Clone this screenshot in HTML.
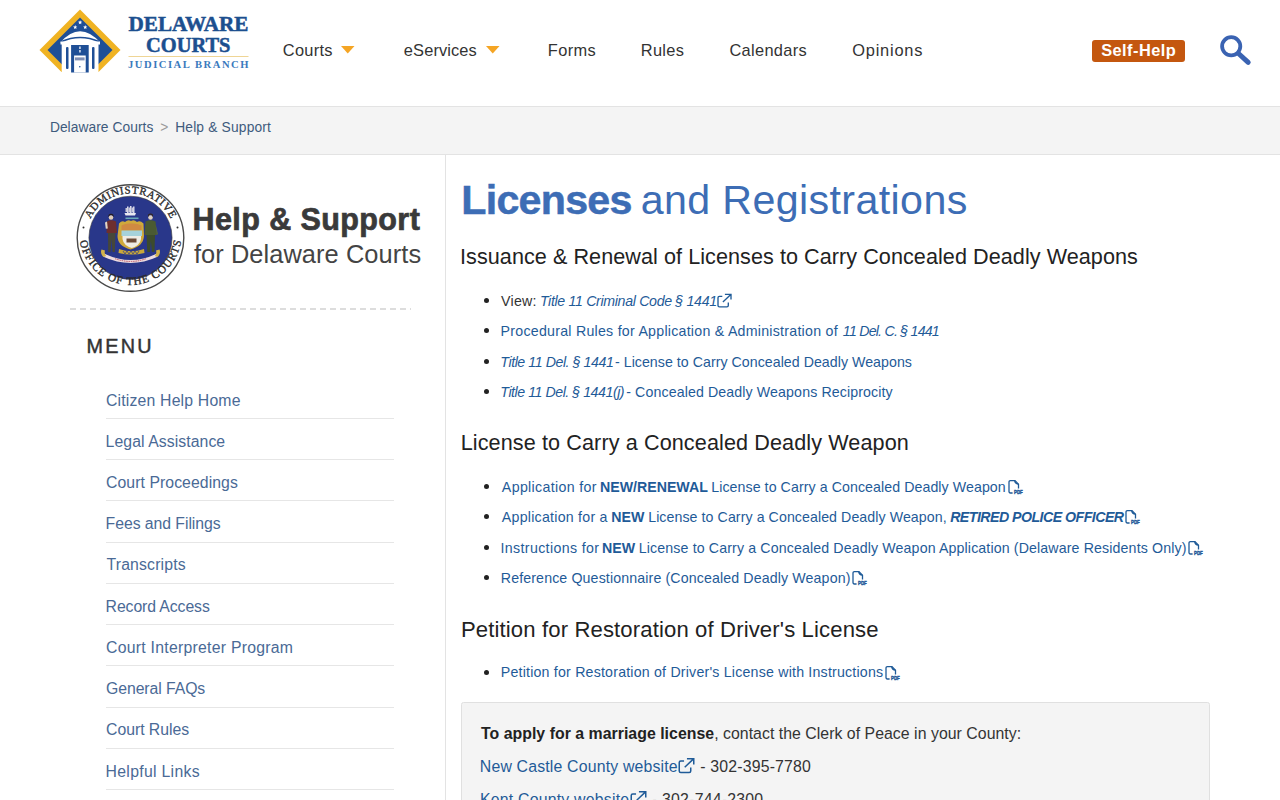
<!DOCTYPE html>
<html><head><meta charset="utf-8"><title>Licenses and Registrations</title>
<style>
html,body{margin:0;padding:0;background:#fff;width:1280px;height:800px;overflow:hidden;position:relative}
.t{position:absolute;white-space:nowrap;line-height:1;}
.t i{font-style:italic}
</style></head><body>
<div style="position:absolute;left:0px;top:0px;width:1280px;height:106px;background:#fff"></div>
<div style="position:absolute;left:0px;top:106px;width:1280px;height:1px;background:#e3e3e3"></div>
<div style="position:absolute;left:0px;top:107px;width:1280px;height:47px;background:#f4f4f4"></div>
<div style="position:absolute;left:0px;top:154px;width:1280px;height:1px;background:#e3e3e3"></div>
<div style="position:absolute;left:445px;top:155px;width:1px;height:645px;background:#e3e3e3"></div>
<svg style="position:absolute;left:0;top:0" width="260" height="106" viewBox="0 0 260 106">
<defs><clipPath id="dclip"><rect x="0" y="0" width="260" height="72"/></clipPath></defs>
<g clip-path="url(#dclip)">
<polygon points="80,9.5 120.5,50 80,90.5 39.5,50" fill="#f0b323"/>
<polygon points="80,17.5 112.5,50 80,82.5 47.5,50" fill="#1f4f96"/>
</g>
<polygon points="80.10,20.20 80.68,21.60 82.19,21.72 81.04,22.71 81.39,24.18 80.10,23.39 78.81,24.18 79.16,22.71 78.01,21.72 79.52,21.60" fill="#fff"/><polygon points="75.20,25.00 75.78,26.40 77.29,26.52 76.14,27.51 76.49,28.98 75.20,28.19 73.91,28.98 74.26,27.51 73.11,26.52 74.62,26.40" fill="#fff"/><polygon points="85.20,25.00 85.78,26.40 87.29,26.52 86.14,27.51 86.49,28.98 85.20,28.19 83.91,28.98 84.26,27.51 83.11,26.52 84.62,26.40" fill="#fff"/>
<path d="M60.3,42.5 Q80,20 100.2,42.5 Z" fill="#fff"/>
<path d="M61,41.8 Q80,33.2 99.5,41.8" fill="none" stroke="#1f4f96" stroke-width="1.5"/>
<rect x="60.5" y="41.5" width="39.5" height="3" fill="#fff"/>
<rect x="61.7" y="43" width="36.8" height="29.5" fill="#fff"/>
<rect x="66" y="46.9" width="2.5" height="22.1" rx="1" fill="#1f4f96"/>
<rect x="92" y="46.9" width="2.5" height="22.1" rx="1" fill="#1f4f96"/>
<rect x="71.1" y="45" width="17.6" height="27.5" fill="#1f4f96"/>
<rect x="74.1" y="55.5" width="11.6" height="17" fill="#fff"/>
<rect x="74.9" y="57.4" width="9.7" height="3" fill="#7f8fb5"/>
<circle cx="79.8" cy="66.8" r="0.8" fill="#1f4f96"/>
<rect x="79.3" y="46.5" width="1.3" height="2.5" fill="#fff"/>
<rect x="79.3" y="50" width="1.3" height="2.5" fill="#fff"/>
<text x="128.5" y="31.3" font-family="Liberation Serif" font-weight="bold" font-size="20.6" fill="#1c4f8f" stroke="#1c4f8f" stroke-width="0.5" textLength="120" lengthAdjust="spacingAndGlyphs">DELAWARE</text>
<text x="146" y="51.6" font-family="Liberation Serif" font-weight="bold" font-size="20.6" fill="#1c4f8f" stroke="#1c4f8f" stroke-width="0.5" textLength="84.5" lengthAdjust="spacingAndGlyphs">COURTS</text>
<rect x="128.5" y="56" width="120" height="1" fill="#efd595"/>
<text x="128" y="68.2" font-family="Liberation Serif" font-weight="bold" font-size="10.6" fill="#3a7abd" textLength="120.5" lengthAdjust="spacing">JUDICIAL BRANCH</text>
</svg>
<div class="t" id="nav1" style="left:282.77px;top:41.92px;font-size:16.4px;color:#333;font-weight:normal;letter-spacing:0.295px;font-family:'Liberation Sans', sans-serif;">Courts</div>
<div class="t" id="nav2" style="left:403.86px;top:41.92px;font-size:16.4px;color:#333;font-weight:normal;letter-spacing:0.122px;font-family:'Liberation Sans', sans-serif;">eServices</div>
<div class="t" id="nav3" style="left:547.79px;top:41.92px;font-size:16.4px;color:#333;font-weight:normal;letter-spacing:0.372px;font-family:'Liberation Sans', sans-serif;">Forms</div>
<div class="t" id="nav4" style="left:640.79px;top:41.92px;font-size:16.4px;color:#333;font-weight:normal;letter-spacing:0.319px;font-family:'Liberation Sans', sans-serif;">Rules</div>
<div class="t" id="nav5" style="left:729.40px;top:41.92px;font-size:16.4px;color:#333;font-weight:normal;letter-spacing:0.320px;font-family:'Liberation Sans', sans-serif;">Calendars</div>
<div class="t" id="nav6" style="left:852.33px;top:41.92px;font-size:16.4px;color:#333;font-weight:normal;letter-spacing:0.762px;font-family:'Liberation Sans', sans-serif;">Opinions</div>
<svg style="position:absolute;left:341px;top:46px" width="14" height="8" viewBox="0 0 14 8"><polygon points="0,0 13.5,0 6.75,7.5" fill="#f5a524"/></svg>
<svg style="position:absolute;left:485.5px;top:46px" width="14" height="8" viewBox="0 0 14 8"><polygon points="0,0 13.5,0 6.75,7.5" fill="#f5a524"/></svg>
<div style="position:absolute;left:1092px;top:40px;width:93px;height:22px;background:#c4570f;border-radius:3px"></div>
<div class="t" id="selfhelp" style="left:1101.16px;top:41.72px;font-size:16.4px;color:#fff;font-weight:bold;letter-spacing:0.443px;font-family:'Liberation Sans', sans-serif;">Self-Help</div>
<svg style="position:absolute;left:1215px;top:30px" width="40" height="40" viewBox="0 0 40 40"><circle cx="16.2" cy="16.3" r="9.1" fill="none" stroke="#3a63b2" stroke-width="3.8"/><line x1="23.5" y1="23.5" x2="33.2" y2="32.4" stroke="#3a63b2" stroke-width="5" stroke-linecap="round"/></svg>
<div class="t" id="bc1" style="left:49.89px;top:121.12px;font-size:13.8px;color:#3e5b7d;font-weight:normal;letter-spacing:0.056px;font-family:'Liberation Sans', sans-serif;">Delaware Courts</div>
<div class="t" id="bc2" style="left:160.30px;top:121.12px;font-size:13.8px;color:#9a9a9a;font-weight:normal;letter-spacing:0.000px;font-family:'Liberation Sans', sans-serif;">&gt;</div>
<div class="t" id="bc3" style="left:175.16px;top:121.12px;font-size:13.8px;color:#3e5b7d;font-weight:normal;letter-spacing:0.168px;font-family:'Liberation Sans', sans-serif;">Help &amp; Support</div>
<svg style="position:absolute;left:70px;top:177px" width="120" height="120" viewBox="70 177 120 120">
<defs>
<path id="sealtop" d="M 86,238 A 44.5,44.5 0 0 1 175,238"/>
<path id="sealbot" d="M 79.5,234 A 51,51 0 0 0 181.5,234"/>
</defs>
<circle cx="130.5" cy="238" r="53.3" fill="#fff" stroke="#4a4a4a" stroke-width="1.4"/>
<circle cx="130.5" cy="237.8" r="41.6" fill="#29378a" stroke="#3a3a3a" stroke-width="0.6"/>
<text font-family="Liberation Serif" font-size="10.8" fill="#2a2a2a" stroke="#2a2a2a" stroke-width="0.35" letter-spacing="0"><textPath href="#sealtop" startOffset="50%" text-anchor="middle" textLength="100" lengthAdjust="spacing">ADMINISTRATIVE</textPath></text>
<text font-family="Liberation Serif" font-size="11.2" fill="#2a2a2a" stroke="#2a2a2a" stroke-width="0.35" letter-spacing="0"><textPath href="#sealbot" startOffset="50%" text-anchor="middle" textLength="146" lengthAdjust="spacing">OFFICE OF THE COURTS</textPath></text>
<circle cx="83.5" cy="227.5" r="1" fill="#333"/>
<circle cx="177.5" cy="227.5" r="1" fill="#333"/>
<!-- ship -->
<path d="M124.5,213 L136,213 L135,215.5 L125.5,215.5 Z" fill="#e8e8f0"/>
<rect x="127" y="206.5" width="1.5" height="6.5" fill="#dde"/>
<rect x="130" y="206" width="1.5" height="7" fill="#dde"/>
<rect x="133" y="206.5" width="1.5" height="6.5" fill="#dde"/>
<path d="M125.5,208 h2 v4 h-2z M128.5,207.5 h2 v5 h-2z M131.5,207.5 h2 v5 h-2z" fill="#c8c8d8"/>
<rect x="125.5" y="217.5" width="13" height="1.6" fill="#6aa9b8"/>
<!-- left figure -->
<circle cx="111" cy="217.5" r="2.3" fill="#e0cdb8"/>
<path d="M108.5,217 q2.5,-4.5 5,0 l0,-2 q-2.5,-2.5 -5,0z" fill="#241a18"/>
<path d="M107,221.5 q4,-2.5 9,0 l1,11.5 l-10.5,0 z" fill="#6e2e2e"/>
<path d="M105,222.5 l2,-1 l0.8,7 l-2,0.3z" fill="#e3d6c8"/>
<path d="M108,233 h7.5 l-0.7,19 h-2.3 l-1,-13 l-1,13 h-2.3z" fill="#46473a"/>
<!-- right figure -->
<circle cx="150.5" cy="217.5" r="2.3" fill="#ddd0c0"/>
<path d="M148,217 q2.5,-4.8 5,0 l0,-2.2 q-2.5,-2.5 -5,0z" fill="#33261a"/>
<path d="M145.5,221.5 q5,-2.5 10,0 l1.5,13.5 l-12.5,0 z" fill="#4a5a32"/>
<path d="M146.5,235 h8.5 l-0.5,17 h-2.6 l-1,-11 l-1,11 h-2.6z" fill="#3c4b2c"/>
<path d="M155.5,224 l2.5,10 l-1.3,1z" fill="#56663c"/>
<!-- shield -->
<path d="M119,223.5 q3,-3.5 6,-1.5 q3,-3 6,-1 q3,-2 6,1 q3,-2 6.5,1.5 l0.5,12.5 q-0.5,10 -13.5,13.5 q-13,-3.5 -13,-13.5z" fill="#cfa93c"/>
<path d="M121.5,225.5 q4,-2.5 9.5,-2 q5.5,-0.5 10.5,2 l0,5 h-20z" fill="#d08a42"/>
<path d="M121.5,230.5 h20.5 v5.5 h-20.5z" fill="#a6d2da"/>
<path d="M122.5,236 h18.5 v3 q-1,6.5 -9.2,9 q-8.3,-2.5 -9.3,-9z" fill="#efece4"/>
<path d="M126.5,238.5 h10 v4 h-10z" fill="#6b4a36"/>
<!-- wheat / base -->
<path d="M119,249 q12.5,4.5 25,0 l0.5,4 q-13,3 -26,0z" fill="#c9a83a"/>
<path d="M123,251 l2,3 l2,-3 l2,3 l2,-3 l2,3 l2,-3 l2,3 l2,-3" fill="none" stroke="#29378a" stroke-width="0.7"/>
<!-- banner -->
<path d="M104,253.5 q27,13 53,0 l0.6,3.2 q-27,12.5 -54.2,0z" fill="#ecdce0"/>
<path d="M115,258.7 q16,5.5 31,0" fill="none" stroke="#b84a5a" stroke-width="0.9" stroke-dasharray="1.5 0.8"/>
<path d="M101.5,249.5 q-1.5,4 1.5,7 q2,1 3,-1 q-2,-2 -1,-5z" fill="#d3b34a"/>
<path d="M159.5,249.5 q1.5,4 -1.5,7 q-2,1 -3,-1 q2,-2 1,-5z" fill="#d3b34a"/>
</svg>

<div class="t" id="help1" style="left:192.52px;top:203.58px;font-size:30.5px;color:#3a3a3a;font-weight:bold;letter-spacing:0.410px;font-family:'Liberation Sans', sans-serif;-webkit-text-stroke:0.7px #3a3a3a">Help &amp; Support</div>
<div class="t" id="help2" style="left:193.92px;top:241.50px;font-size:25.4px;color:#444;font-weight:normal;letter-spacing:0.079px;font-family:'Liberation Sans', sans-serif;">for Delaware Courts</div>
<div style="position:absolute;left:70px;top:308px;width:341px;height:2px;background:repeating-linear-gradient(90deg,#dddddd 0 6px,transparent 6px 10px)"></div>
<div class="t" id="menuh" style="left:86.43px;top:336.84px;font-size:19.8px;color:#333;font-weight:normal;letter-spacing:2.276px;font-family:'Liberation Sans', sans-serif;-webkit-text-stroke:0.45px #333">MENU</div>
<div class="t" id="menu0" style="left:106.00px;top:392.53px;font-size:15.8px;color:#4a6a96;font-weight:normal;letter-spacing:0.173px;font-family:'Liberation Sans', sans-serif;">Citizen Help Home</div>
<div style="position:absolute;left:106px;top:418px;width:288px;height:1px;background:#e6e6e6"></div>
<div class="t" id="menu1" style="left:105.59px;top:433.75px;font-size:15.8px;color:#4a6a96;font-weight:normal;letter-spacing:0.068px;font-family:'Liberation Sans', sans-serif;">Legal Assistance</div>
<div style="position:absolute;left:106px;top:459px;width:288px;height:1px;background:#e6e6e6"></div>
<div class="t" id="menu2" style="left:106.00px;top:474.97px;font-size:15.8px;color:#4a6a96;font-weight:normal;letter-spacing:0.062px;font-family:'Liberation Sans', sans-serif;">Court Proceedings</div>
<div style="position:absolute;left:106px;top:500px;width:288px;height:1px;background:#e6e6e6"></div>
<div class="t" id="menu3" style="left:105.59px;top:516.19px;font-size:15.8px;color:#4a6a96;font-weight:normal;letter-spacing:-0.055px;font-family:'Liberation Sans', sans-serif;">Fees and Filings</div>
<div style="position:absolute;left:106px;top:542px;width:288px;height:1px;background:#e6e6e6"></div>
<div class="t" id="menu4" style="left:106.56px;top:557.41px;font-size:15.8px;color:#4a6a96;font-weight:normal;letter-spacing:0.148px;font-family:'Liberation Sans', sans-serif;">Transcripts</div>
<div style="position:absolute;left:106px;top:583px;width:288px;height:1px;background:#e6e6e6"></div>
<div class="t" id="menu5" style="left:105.59px;top:598.63px;font-size:15.8px;color:#4a6a96;font-weight:normal;letter-spacing:-0.095px;font-family:'Liberation Sans', sans-serif;">Record Access</div>
<div style="position:absolute;left:106px;top:624px;width:288px;height:1px;background:#e6e6e6"></div>
<div class="t" id="menu6" style="left:106.00px;top:639.85px;font-size:15.8px;color:#4a6a96;font-weight:normal;letter-spacing:0.256px;font-family:'Liberation Sans', sans-serif;">Court Interpreter Program</div>
<div style="position:absolute;left:106px;top:665px;width:288px;height:1px;background:#e6e6e6"></div>
<div class="t" id="menu7" style="left:106.00px;top:681.07px;font-size:15.8px;color:#4a6a96;font-weight:normal;letter-spacing:-0.075px;font-family:'Liberation Sans', sans-serif;">General FAQs</div>
<div style="position:absolute;left:106px;top:707px;width:288px;height:1px;background:#e6e6e6"></div>
<div class="t" id="menu8" style="left:106.00px;top:722.29px;font-size:15.8px;color:#4a6a96;font-weight:normal;letter-spacing:-0.026px;font-family:'Liberation Sans', sans-serif;">Court Rules</div>
<div style="position:absolute;left:106px;top:748px;width:288px;height:1px;background:#e6e6e6"></div>
<div class="t" id="menu9" style="left:105.59px;top:763.51px;font-size:15.8px;color:#4a6a96;font-weight:normal;letter-spacing:0.295px;font-family:'Liberation Sans', sans-serif;">Helpful Links</div>
<div style="position:absolute;left:106px;top:789px;width:288px;height:1px;background:#e6e6e6"></div>
<div class="t" id="title1" style="left:461.31px;top:180.12px;font-size:41.2px;color:#3d6db5;font-weight:bold;letter-spacing:-0.743px;font-family:'Liberation Sans', sans-serif;-webkit-text-stroke:0.5px #3d6db5">Licenses</div>
<div class="t" id="title2" style="left:640.64px;top:180.12px;font-size:41.2px;color:#3d6db5;font-weight:normal;letter-spacing:0.382px;font-family:'Liberation Sans', sans-serif;">and Registrations</div>
<div class="t" id="h2a" style="left:460.01px;top:246.42px;font-size:21.6px;color:#222;font-weight:normal;letter-spacing:0.058px;font-family:'Liberation Sans', sans-serif;">Issuance &amp; Renewal of Licenses to Carry Concealed Deadly Weapons</div>
<div class="t" id="h2b" style="left:460.64px;top:432.22px;font-size:21.6px;color:#222;font-weight:normal;letter-spacing:0.109px;font-family:'Liberation Sans', sans-serif;">License to Carry a Concealed Deadly Weapon</div>
<div class="t" id="h2c" style="left:460.94px;top:618.79px;font-size:22.1px;color:#222;font-weight:normal;letter-spacing:0.132px;font-family:'Liberation Sans', sans-serif;">Petition for Restoration of Driver's License</div>
<div style="position:absolute;left:483.9px;top:297.7px;width:5.2px;height:5.2px;border-radius:50%;background:#222"></div>
<div style="position:absolute;left:483.9px;top:328.0px;width:5.2px;height:5.2px;border-radius:50%;background:#222"></div>
<div style="position:absolute;left:483.9px;top:359.0px;width:5.2px;height:5.2px;border-radius:50%;background:#222"></div>
<div style="position:absolute;left:483.9px;top:388.9px;width:5.2px;height:5.2px;border-radius:50%;background:#222"></div>
<div class="t" id="la0a" style="left:501.00px;top:293.68px;font-size:14.2px;color:#333;font-weight:normal;letter-spacing:0.269px;font-family:'Liberation Sans', sans-serif;">View:</div>
<div class="t" id="la0b" style="left:539.90px;top:293.68px;font-size:14.2px;color:#1f5b98;font-weight:normal;letter-spacing:-0.332px;font-family:'Liberation Sans', sans-serif;"><i>Title 11 Criminal Code § 1441</i><span style="display:inline-block;position:relative;width:16.0px;height:0"><svg style="position:absolute;left:-0.5px;top:-13.7px" width="17.0" height="17.0" viewBox="0 0 17 17"><path d="M6.3,4.4 H3.4 Q2,4.4 2,5.8 V13.4 Q2,14.8 3.4,14.8 H10.9 Q12.3,14.8 12.3,13.4 V10.4" fill="none" stroke="currentColor" stroke-width="1.35"/><path d="M6.9,10 L14.8,2.6 M8.9,2.4 H15 V7.6" fill="none" stroke="currentColor" stroke-width="1.35"/></svg></span></div>
<div class="t" id="la1a" style="left:500.61px;top:323.98px;font-size:14.2px;color:#1f5b98;font-weight:normal;letter-spacing:0.252px;font-family:'Liberation Sans', sans-serif;">Procedural Rules for Application &amp; Administration of</div>
<div class="t" id="la1b" style="left:842.84px;top:323.98px;font-size:14.2px;color:#1f5b98;font-weight:normal;letter-spacing:-0.778px;font-family:'Liberation Sans', sans-serif;"><i>11 Del. C. § 1441</i></div>
<div class="t" id="la2a" style="left:500.32px;top:354.98px;font-size:14.2px;color:#1f5b98;font-weight:normal;letter-spacing:-0.439px;font-family:'Liberation Sans', sans-serif;"><i>Title 11 Del. § 1441</i></div>
<div class="t" id="la2b" style="left:614.98px;top:354.98px;font-size:14.2px;color:#1f5b98;font-weight:normal;letter-spacing:0.035px;font-family:'Liberation Sans', sans-serif;">- License to Carry Concealed Deadly Weapons</div>
<div class="t" id="la3a" style="left:500.32px;top:384.88px;font-size:14.2px;color:#1f5b98;font-weight:normal;letter-spacing:-0.464px;font-family:'Liberation Sans', sans-serif;"><i>Title 11 Del. § 1441(j)</i></div>
<div class="t" id="la3b" style="left:626.22px;top:384.88px;font-size:14.2px;color:#1f5b98;font-weight:normal;letter-spacing:0.111px;font-family:'Liberation Sans', sans-serif;">- Concealed Deadly Weapons Reciprocity</div>
<div style="position:absolute;left:483.9px;top:483.7px;width:5.2px;height:5.2px;border-radius:50%;background:#222"></div>
<div style="position:absolute;left:483.9px;top:513.8px;width:5.2px;height:5.2px;border-radius:50%;background:#222"></div>
<div style="position:absolute;left:483.9px;top:544.6px;width:5.2px;height:5.2px;border-radius:50%;background:#222"></div>
<div style="position:absolute;left:483.9px;top:574.9px;width:5.2px;height:5.2px;border-radius:50%;background:#222"></div>
<div class="t" id="lb0a" style="left:501.85px;top:479.68px;font-size:14.2px;color:#1f5b98;font-weight:normal;letter-spacing:0.339px;font-family:'Liberation Sans', sans-serif;">Application for</div>
<div class="t" id="lb0b" style="left:600.02px;top:479.68px;font-size:14.2px;color:#1f5b98;font-weight:normal;letter-spacing:-0.015px;font-family:'Liberation Sans', sans-serif;"><b>NEW/RENEWAL</b></div>
<div class="t" id="lb0c" style="left:711.19px;top:479.68px;font-size:14.2px;color:#1f5b98;font-weight:normal;letter-spacing:0.073px;font-family:'Liberation Sans', sans-serif;">License to Carry a Concealed Deadly Weapon<span style="display:inline-block;position:relative;width:17px;height:0"><svg style="position:absolute;left:0.9px;top:-13.7px" width="18" height="18" viewBox="0 0 18 18"><path d="M5.6,15 H3.4 Q2,15 2,13.6 V4 Q2,2.6 3.4,2.6 H8 L11.5,6.2 V10.4" fill="none" stroke="currentColor" stroke-width="1.3"/><path d="M7.7,2.8 Q8.2,5.8 11.3,6" fill="none" stroke="currentColor" stroke-width="1.3"/><text x="7" y="16.2" font-family="Liberation Sans" font-weight="bold" font-size="6" fill="currentColor" stroke="currentColor" stroke-width="0.5" letter-spacing="0" style="letter-spacing:0" textLength="8.8" lengthAdjust="spacingAndGlyphs">PDF</text></svg></span></div>
<div class="t" id="lb1a" style="left:501.85px;top:509.78px;font-size:14.2px;color:#1f5b98;font-weight:normal;letter-spacing:0.240px;font-family:'Liberation Sans', sans-serif;">Application for a</div>
<div class="t" id="lb1b" style="left:611.20px;top:509.78px;font-size:14.2px;color:#1f5b98;font-weight:normal;letter-spacing:-0.004px;font-family:'Liberation Sans', sans-serif;"><b>NEW</b></div>
<div class="t" id="lb1c" style="left:648.19px;top:509.78px;font-size:14.2px;color:#1f5b98;font-weight:normal;letter-spacing:0.071px;font-family:'Liberation Sans', sans-serif;">License to Carry a Concealed Deadly Weapon,</div>
<div class="t" id="lb1d" style="left:950.15px;top:509.78px;font-size:14.2px;color:#1f5b98;font-weight:normal;letter-spacing:-0.536px;font-family:'Liberation Sans', sans-serif;"><b><i>RETIRED POLICE OFFICER</i></b><span style="display:inline-block;position:relative;width:17px;height:0"><svg style="position:absolute;left:0.9px;top:-13.7px" width="18" height="18" viewBox="0 0 18 18"><path d="M5.6,15 H3.4 Q2,15 2,13.6 V4 Q2,2.6 3.4,2.6 H8 L11.5,6.2 V10.4" fill="none" stroke="currentColor" stroke-width="1.3"/><path d="M7.7,2.8 Q8.2,5.8 11.3,6" fill="none" stroke="currentColor" stroke-width="1.3"/><text x="7" y="16.2" font-family="Liberation Sans" font-weight="bold" font-size="6" fill="currentColor" stroke="currentColor" stroke-width="0.5" letter-spacing="0" style="letter-spacing:0" textLength="8.8" lengthAdjust="spacingAndGlyphs">PDF</text></svg></span></div>
<div class="t" id="lb2a" style="left:500.49px;top:540.58px;font-size:14.2px;color:#1f5b98;font-weight:normal;letter-spacing:0.362px;font-family:'Liberation Sans', sans-serif;">Instructions for</div>
<div class="t" id="lb2b" style="left:601.91px;top:540.58px;font-size:14.2px;color:#1f5b98;font-weight:normal;letter-spacing:0.119px;font-family:'Liberation Sans', sans-serif;"><b>NEW</b></div>
<div class="t" id="lb2c" style="left:638.81px;top:540.58px;font-size:14.2px;color:#1f5b98;font-weight:normal;letter-spacing:0.127px;font-family:'Liberation Sans', sans-serif;">License to Carry a Concealed Deadly Weapon Application (Delaware Residents Only)<span style="display:inline-block;position:relative;width:17px;height:0"><svg style="position:absolute;left:0.9px;top:-13.7px" width="18" height="18" viewBox="0 0 18 18"><path d="M5.6,15 H3.4 Q2,15 2,13.6 V4 Q2,2.6 3.4,2.6 H8 L11.5,6.2 V10.4" fill="none" stroke="currentColor" stroke-width="1.3"/><path d="M7.7,2.8 Q8.2,5.8 11.3,6" fill="none" stroke="currentColor" stroke-width="1.3"/><text x="7" y="16.2" font-family="Liberation Sans" font-weight="bold" font-size="6" fill="currentColor" stroke="currentColor" stroke-width="0.5" letter-spacing="0" style="letter-spacing:0" textLength="8.8" lengthAdjust="spacingAndGlyphs">PDF</text></svg></span></div>
<div class="t" id="lb3" style="left:500.80px;top:570.88px;font-size:14.2px;color:#1f5b98;font-weight:normal;letter-spacing:0.125px;font-family:'Liberation Sans', sans-serif;">Reference Questionnaire (Concealed Deadly Weapon)<span style="display:inline-block;position:relative;width:17px;height:0"><svg style="position:absolute;left:0.9px;top:-13.7px" width="18" height="18" viewBox="0 0 18 18"><path d="M5.6,15 H3.4 Q2,15 2,13.6 V4 Q2,2.6 3.4,2.6 H8 L11.5,6.2 V10.4" fill="none" stroke="currentColor" stroke-width="1.3"/><path d="M7.7,2.8 Q8.2,5.8 11.3,6" fill="none" stroke="currentColor" stroke-width="1.3"/><text x="7" y="16.2" font-family="Liberation Sans" font-weight="bold" font-size="6" fill="currentColor" stroke="currentColor" stroke-width="0.5" letter-spacing="0" style="letter-spacing:0" textLength="8.8" lengthAdjust="spacingAndGlyphs">PDF</text></svg></span></div>
<div style="position:absolute;left:483.7px;top:669.9px;width:5.2px;height:5.2px;border-radius:50%;background:#222"></div>
<div class="t" id="lc0" style="left:500.80px;top:665.38px;font-size:14.2px;color:#1f5b98;font-weight:normal;letter-spacing:0.199px;font-family:'Liberation Sans', sans-serif;">Petition for Restoration of Driver's License with Instructions<span style="display:inline-block;position:relative;width:17px;height:0"><svg style="position:absolute;left:0.9px;top:-13.7px" width="18" height="18" viewBox="0 0 18 18"><path d="M5.6,15 H3.4 Q2,15 2,13.6 V4 Q2,2.6 3.4,2.6 H8 L11.5,6.2 V10.4" fill="none" stroke="currentColor" stroke-width="1.3"/><path d="M7.7,2.8 Q8.2,5.8 11.3,6" fill="none" stroke="currentColor" stroke-width="1.3"/><text x="7" y="16.2" font-family="Liberation Sans" font-weight="bold" font-size="6" fill="currentColor" stroke="currentColor" stroke-width="0.5" letter-spacing="0" style="letter-spacing:0" textLength="8.8" lengthAdjust="spacingAndGlyphs">PDF</text></svg></span></div>
<div style="position:absolute;left:461px;top:702px;width:749px;height:120px;background:#f4f4f4;border:1px solid #e0e0e0;border-radius:2.5px;box-sizing:border-box"></div>
<div class="t" id="box1" style="left:480.99px;top:725.58px;font-size:15.85px;color:#333;font-weight:normal;letter-spacing:0.032px;font-family:'Liberation Sans', sans-serif;"><b style="color:#222">To apply for a marriage license</b>, contact the Clerk of Peace in your County:</div>
<div class="t" id="box2" style="left:479.82px;top:758.78px;font-size:15.85px;color:#333;font-weight:normal;letter-spacing:0.171px;font-family:'Liberation Sans', sans-serif;"><span style="color:#1f5b98">New Castle County website<span style="display:inline-block;position:relative;width:17.9px;height:0"><svg style="position:absolute;left:-0.6px;top:-15.3px" width="19.0" height="19.0" viewBox="0 0 17 17"><path d="M6.3,4.4 H3.4 Q2,4.4 2,5.8 V13.4 Q2,14.8 3.4,14.8 H10.9 Q12.3,14.8 12.3,13.4 V10.4" fill="none" stroke="currentColor" stroke-width="1.35"/><path d="M6.9,10 L14.8,2.6 M8.9,2.4 H15 V7.6" fill="none" stroke="currentColor" stroke-width="1.35"/></svg></span></span> - 302-395-7780</div>
<div class="t" id="box3" style="left:479.88px;top:791.58px;font-size:15.85px;color:#333;font-weight:normal;letter-spacing:0.221px;font-family:'Liberation Sans', sans-serif;"><span style="color:#1f5b98">Kent County website<span style="display:inline-block;position:relative;width:17.9px;height:0"><svg style="position:absolute;left:-0.6px;top:-15.3px" width="19.0" height="19.0" viewBox="0 0 17 17"><path d="M6.3,4.4 H3.4 Q2,4.4 2,5.8 V13.4 Q2,14.8 3.4,14.8 H10.9 Q12.3,14.8 12.3,13.4 V10.4" fill="none" stroke="currentColor" stroke-width="1.35"/><path d="M6.9,10 L14.8,2.6 M8.9,2.4 H15 V7.6" fill="none" stroke="currentColor" stroke-width="1.35"/></svg></span></span> - 302-744-2300</div>
</body></html>
